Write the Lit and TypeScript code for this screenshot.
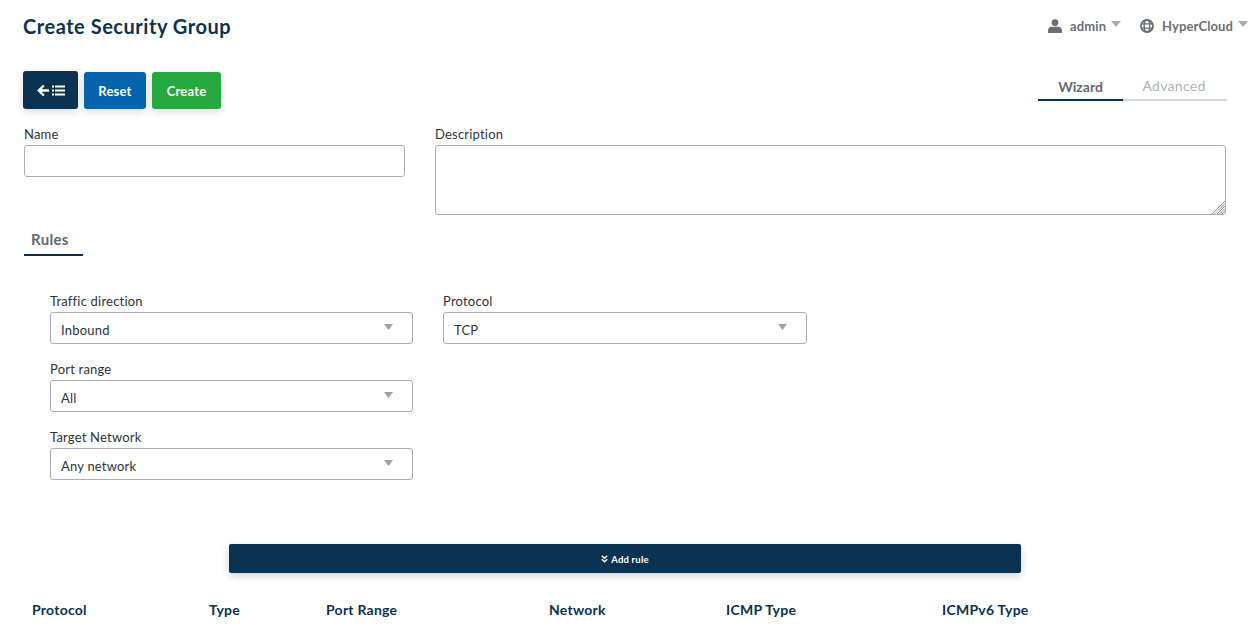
import { LitElement, html, css, svg } from "lit";
import { customElement } from "lit/decorators.js";

const caret = svg`<svg class="caret" width="9" height="6" viewBox="0 0 10 6" preserveAspectRatio="none"><path d="M0 0h10L5 6z" fill="currentColor"/></svg>`;

@customElement("app-root")
export class AppRoot extends LitElement {
  static styles = css`
    :host { display: block; width: 1255px; height: 631px; overflow: hidden; background: #fff;
      font-family: Lato, "Open Sans", sans-serif; color: #3a3f45; font-size: 13px; box-sizing: border-box; position: relative; }
    * { box-sizing: border-box; }
    .top { display: flex; justify-content: space-between; align-items: flex-start; height: 71px; padding: 13px 7px 0 23px; }
    h1 { margin: 0; font-size: 20px; line-height: 26px; font-weight: 700; color: #0b3250; letter-spacing: 0.53px; }
    .user { display: flex; gap: 19px; padding-top: 4px; color: #6a6e73; font-size: 13px; font-weight: 700; letter-spacing: 0.1px; }
    .user > div { display: flex; align-items: center; gap: 8px; height: 18px; }
    .user .caret { color: #a9adb2; margin: -4px 0 0 -3px; width: 10px; }
    .actions { display: flex; justify-content: space-between; align-items: flex-start; padding: 0 28px 0 23px; height: 55px; }
    .btns { display: flex; gap: 6px; align-items: flex-start; }
    .btn { height: 37px; margin-top: 1px; border-radius: 3px; color: #fff; font-size: 13px; font-weight: 700;
      display: flex; align-items: center; justify-content: center; box-shadow: 0 3px 8px rgba(0,0,0,.14); letter-spacing: .2px; }
    .back { width: 55px; height: 38px; margin-top: 0; background: #0b3250; }
    .reset { width: 62px; background: #0565ac; }
    .create { width: 69px; background: #28a93f; }
    .tabs { display: flex; width: 189px; height: 30px; }
    .tab { text-align: center; font-size: 14px; line-height: 30px; }
    .tab.on { width: 85px; font-weight: 700; color: #64686d; border-bottom: 2px solid #0b3250; padding-top: 1px; }
    .tab.off { flex: 1; color: #adb2b8; border-bottom: 2px solid #d3d6da; line-height: 30px; padding-right: 2px; letter-spacing: .3px; }
    .row1 { display: grid; grid-template-columns: 381px 791px; column-gap: 30px; padding-left: 24px; height: 110px; margin-top: -1px; }
    label { display: block; font-size: 13px; line-height: 19px; color: #2f3337; margin-bottom: 1px; letter-spacing: .2px; }
    .input { display: block; width: 100%; height: 32px; border: 1px solid #a8afb8; border-radius: 3px; background: #fff; }
    .area { position: relative; height: 70px; }
    .area textarea { height: 70px; resize: none; outline: none; margin: 0; padding: 4px; font: inherit; }
    .grip { position: absolute; right: 1px; bottom: 1px; pointer-events: none; }
    .sub { width: 59px; margin-left: 24px; height: 30px; border-bottom: 2px solid #0b3250; font-size: 15px; font-weight: 700; color: #64686d; padding: 4px 0 0 7px; line-height: 19px; margin-top: -9px; letter-spacing: .3px; }
    .form { display: grid; grid-template-columns: 363px 364px; column-gap: 30px; row-gap: 16px; padding: 36px 0 0 50px; height: 288px; align-content: start; }
    .sel { height: 32px; width: 100%; border: 1px solid #a8afb8; border-radius: 3px; display: flex; align-items: center; justify-content: space-between; padding: 3px 19px 0 10px; font-size: 13px; color: #2f3337; letter-spacing: .2px; }
    .sel .caret { color: #9ea2a7; margin-top: -6px; }
    .add { margin: 0 0 0 229px; width: 792px; height: 29px; background: #0b3250; border-radius: 2px; color: #fff; font-size: 9.5px; font-weight: 700; display: flex; align-items: center; justify-content: center; gap: 3px; box-shadow: 0 3px 8px rgba(0,0,0,.18); letter-spacing: .2px; padding-top: 1px; }
    .cols { display: grid; grid-template-columns: 177px 117px 223px 177px 216px 200px; padding: 28px 0 0 32px; font-size: 14px; font-weight: 700; color: #0b3250; line-height: 18px; letter-spacing: .25px; }
  `;

  private field(name: string, value: string) {
    return html`<div><label>${name}</label><div class="sel"><span>${value}</span>${caret}</div></div>`;
  }

  render() {
    return html`
      <div class="top">
        <h1>Create Security Group</h1>
        <div class="user">
          <div>
            <svg width="14" height="14" viewBox="0 0 14 14" fill="#6a6e73"><circle cx="7" cy="3.6" r="3.4"/><path d="M0 14v-2.2C0 9.2 1.8 7.700 4 7.700h6c2.200 0 4 1.500 4 4.100V14z"/></svg>
            <span>admin</span>${caret}
          </div>
          <div>
            <svg width="14" height="14" viewBox="0 0 14 14" fill="#6a6e73" stroke="#6a6e73" stroke-width="1.200">
              <circle cx="7" cy="7" r="6" fill="none" stroke-width="1.800"/>
              <ellipse cx="7" cy="7" rx="2.800" ry="6" fill="none" stroke-width="1.400"/>
              <path d="M1 4.800h12M1 9.200h12" fill="none" stroke-width="1.300"/>
            </svg>
            <span>HyperCloud</span>${caret}
          </div>
        </div>
      </div>
      <div class="actions">
        <div class="btns">
          <div class="btn back">
            <svg width="28" height="13" viewBox="0 0 28 13" fill="none" stroke="#fff" stroke-width="2.400"><path d="M12 6.500H2M6.800 1.500 1.800 6.500l5 5"/><path d="M18 2.500h10M18 6.500h10M18 10.500h10" stroke-width="1.900"/><path d="M15 2.500h2M15 6.500h2M15 10.500h2" stroke-width="2.200"/></svg>
          </div>
          <div class="btn reset">Reset</div>
          <div class="btn create">Create</div>
        </div>
        <div class="tabs"><div class="tab on">Wizard</div><div class="tab off">Advanced</div></div>
      </div>
      <div class="row1">
        <div><label>Name</label><div class="input"></div></div>
        <div>
          <label>Description</label>
          <div class="area">
            <textarea class="input"></textarea>
            <svg class="grip" width="13" height="13" viewBox="0 0 13 13" stroke="#8f949a" stroke-width="1"><path d="M0 13 13 0M2.500 13 13 2.500M5 13 13 5M7.500 13 13 7.500M10 13 13 10"/></svg>
          </div>
        </div>
      </div>
      <div class="sub">Rules</div>
      <div class="form">
        ${this.field("Traffic direction", "Inbound")}
        ${this.field("Protocol", "TCP")}
        ${this.field("Port range", "All")}
        <div></div>
        ${this.field("Target Network", "Any network")}
      </div>
      <div class="add">
        <svg width="7" height="8" viewBox="0 0 7 8" fill="none" stroke="#fff" stroke-width="1.500"><path d="M.8.8 3.500 3.300 6.200.8M.8 4.300 3.500 6.800 6.200 4.300"/></svg>
        <span>Add rule</span>
      </div>
      <div class="cols"><span>Protocol</span><span>Type</span><span>Port Range</span><span>Network</span><span>ICMP Type</span><span>ICMPv6 Type</span></div>
    `;
  }
}
